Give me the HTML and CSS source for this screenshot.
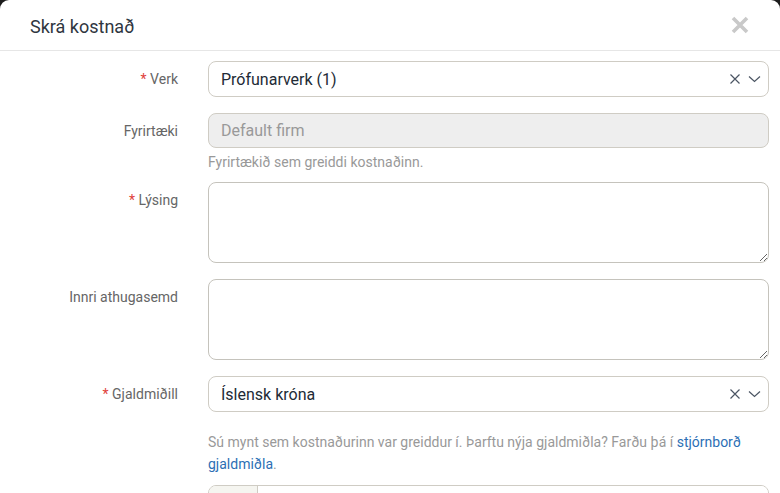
FILE: index.html
```html
<!DOCTYPE html>
<html lang="is">
<head>
    <meta charset="UTF-8">
    <meta name="viewport" content="width=device-width, initial-scale=1.0">
    <title>Skrá kostnað</title>
    <link rel="stylesheet" href="styles.css">
</head>
<body>
    <div class="modal">
        <div class="modal-header">
            <h4 class="modal-title">Skrá kostnað</h4>
            <button type="button" class="close" aria-label="Loka">
                <svg width="18" height="18" viewBox="0 0 18 18"><path d="M2 2L16 16M16 2L2 16" stroke="#c9c9c9" stroke-width="3.6" stroke-linecap="butt"/></svg>
            </button>
        </div>
        <form class="modal-body">
            <div class="form-row">
                <label class="control-label"><span class="req">*</span> Verk</label>
                <div class="control">
                    <div class="select">
                        <span class="select-value">Prófunarverk (1)</span>
                        <span class="select-icons">
                            <svg width="12" height="12" viewBox="0 0 12 12"><path d="M1.5 1.5L10.5 10.5M10.5 1.5L1.5 10.5" stroke="#4b5563" stroke-width="1.2"/></svg>
                            <svg width="13" height="8" viewBox="0 0 13 8"><path d="M1 1.5L6.5 6.5L12 1.5" stroke="#4b5563" stroke-width="1.2" fill="none"/></svg>
                        </span>
                    </div>
                </div>
            </div>
            <div class="form-row">
                <label class="control-label">Fyrirtæki</label>
                <div class="control">
                    <input class="input" type="text" placeholder="Default firm" disabled>
                    <p class="help">Fyrirtækið sem greiddi kostnaðinn.</p>
                </div>
            </div>
            <div class="form-row">
                <label class="control-label"><span class="req">*</span> Lýsing</label>
                <div class="control">
                    <textarea class="textarea"></textarea>
                </div>
            </div>
            <div class="form-row">
                <label class="control-label">Innri athugasemd</label>
                <div class="control">
                    <textarea class="textarea"></textarea>
                </div>
            </div>
            <div class="form-row">
                <label class="control-label"><span class="req">*</span> Gjaldmiðill</label>
                <div class="control">
                    <div class="select">
                        <span class="select-value">Íslensk króna</span>
                        <span class="select-icons">
                            <svg width="12" height="12" viewBox="0 0 12 12"><path d="M1.5 1.5L10.5 10.5M10.5 1.5L1.5 10.5" stroke="#4b5563" stroke-width="1.2"/></svg>
                            <svg width="13" height="8" viewBox="0 0 13 8"><path d="M1 1.5L6.5 6.5L12 1.5" stroke="#4b5563" stroke-width="1.2" fill="none"/></svg>
                        </span>
                    </div>
                    <p class="help help-wide">Sú mynt sem kostnaðurinn var greiddur í. Þarftu nýja gjaldmiðla? Farðu þá í <a href="#">stjórnborð gjaldmiðla</a>.</p>
                </div>
            </div>
            <div class="form-row">
                <label class="control-label"></label>
                <div class="control">
                    <div class="input-group">
                        <span class="addon"></span>
                        <input class="input group-input" type="text">
                    </div>
                </div>
            </div>
        </form>
    </div>
</body>
</html>
```

FILE: styles.css
```css
html, body {
    margin: 0;
    padding: 0;
    background-color: #1c1c1c;
    font-family: Roboto, "Liberation Sans", Arial, sans-serif;
    overflow: hidden;
}
.modal {
    background: #ffffff;
    border-radius: 9px 9px 0 0;
    height: 493px;
    overflow: hidden;
}
.modal-header {
    display: flex;
    align-items: center;
    justify-content: space-between;
    height: 51px;
    padding: 3px 31px 0 30px;
    border-bottom: 1px solid #e6e6e6;
    box-sizing: border-box;
}
.modal-title {
    margin: 0;
    font-size: 18px;
    font-weight: 400;
    color: #2f3640;
}
.close {
    background: none;
    border: 0;
    padding: 0;
    display: flex;
    margin-top: -4px;
}
.modal-body {
    padding: 10px 11px 0 0;
}
.form-row {
    display: grid;
    grid-template-columns: 178px 1fr;
    column-gap: 30px;
    margin-bottom: 16px;
}
.control-label {
    text-align: right;
    font-size: 14px;
    line-height: 20px;
    padding-top: 8px;
    color: #666666;
}
.req {
    color: #e0413b;
}
.control {
    min-width: 0;
}
.select, .input {
    display: flex;
    align-items: center;
    width: 100%;
    height: 36px;
    box-sizing: border-box;
    border: 1px solid #cfccc4;
    border-radius: 8px;
    padding: 0 12px;
    font-family: inherit;
    font-size: 16px;
    color: #222b36;
    background: #ffffff;
}
.select {
    justify-content: space-between;
    padding-right: 7px;
}
.select-icons {
    display: flex;
    align-items: center;
    gap: 7px;
}
.input:disabled {
    background: #eeeeee;
    height: 35px;
}
.input::placeholder {
    color: #999999;
}
.help {
    margin: 4px 0 -6px;
    font-size: 14px;
    line-height: 20px;
    color: #999999;
}
.help-wide {
    margin: 19px 0 0;
    line-height: 22px;
}
.help a {
    color: #2c6fb5;
    text-decoration: none;
}
.textarea {
    display: block;
    width: 100%;
    height: 81px;
    box-sizing: border-box;
    border: 1px solid #c5c3bc;
    border-radius: 8px;
    padding: 8px 12px;
    font-family: inherit;
    font-size: 16px;
    resize: vertical;
}
.form-row:has(.help-wide) {
    margin-bottom: 10px;
}
.input-group {
    display: flex;
    height: 36px;
    border: 1px solid #cfccc4;
    border-radius: 8px;
    overflow: hidden;
}
.addon {
    flex: 0 0 48px;
    background: #f5f5f0;
    border-right: 1px solid #cfccc4;
}
.group-input {
    flex: 1;
    border: 0;
    border-radius: 0;
    height: 100%;
}
```
